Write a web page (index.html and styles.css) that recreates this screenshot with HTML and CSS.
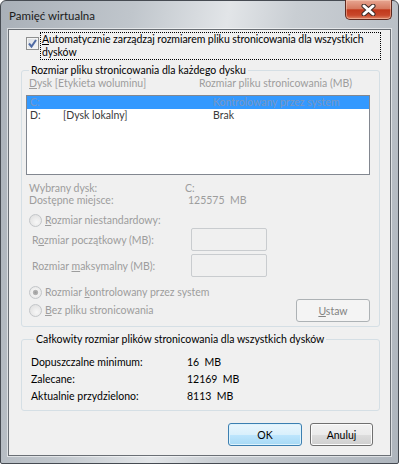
FILE: index.html
```html
<!DOCTYPE html>
<html lang="pl">
<head>
    <meta charset="UTF-8">
    <meta name="viewport" content="width=device-width, initial-scale=1.0">
    <title>Pamięć wirtualna</title>
    <link rel="stylesheet" href="styles.css">
</head>
<body>

<div class="window">
    <div class="titlebar">
        <span class="title">Pamięć wirtualna</span>
        <button class="close" type="button" aria-label="Zamknij">
            <svg width="17" height="12" viewBox="0 0 17 12">
                <path d="M4 2 L13 10 M13 2 L4 10" stroke="#3b2a26" stroke-width="5" stroke-linecap="round"/>
                <path d="M4 2 L13 10 M13 2 L4 10" stroke="#ffffff" stroke-width="3" stroke-linecap="round"/>
            </svg>
        </button>
    </div>

    <div class="client">
        <div class="auto-row">
            <span class="checkbox">
                <svg width="11" height="11" viewBox="0 0 11 11">
                    <path d="M2 5.5 L4.5 8.5 L9 2" fill="none" stroke="#4f6aa3" stroke-width="2"/>
                </svg>
            </span>
            <span class="auto-text"><u>A</u>utomatycznie zarządzaj rozmiarem pliku stronicowania dla wszystkich dysków</span>
        </div>

        <fieldset class="group drives">
            <legend>Rozmiar pliku stronicowania dla każdego dysku</legend>

            <div class="columns disabled">
                <span><u>D</u>ysk [Etykieta woluminu]</span>
                <span>Rozmiar pliku stronicowania (MB)</span>
            </div>

            <ul class="drive-list">
                <li class="selected"><span>C:</span><span></span><span>Kontrolowany przez system</span></li>
                <li><span>D:</span><span>[Dysk lokalny]</span><span>Brak</span></li>
            </ul>

            <div class="drive-info disabled">
                <span>Wybrany dysk:</span><span class="val-c">C:</span>
                <span>Dostępne miejsce:</span><span>125575&nbsp; MB</span>
            </div>

            <div class="radio-row disabled first">
                <span class="radio"></span><span><u>R</u>ozmiar niestandardowy:</span>
            </div>
            <div class="size-row disabled">
                <span>R<u>o</u>zmiar początkowy (MB):</span><span class="textbox"></span>
            </div>
            <div class="size-row second disabled">
                <span>Rozmiar <u>m</u>aksymalny (MB):</span><span class="textbox"></span>
            </div>
            <div class="radio-row disabled system">
                <span class="radio checked"></span><span>Rozmiar <u>k</u>ontrolowany przez system</span>
            </div>
            <div class="radio-row disabled last">
                <span class="radio"></span><span><u>B</u>ez pliku stronicowania</span>
                <button class="btn btn-disabled" type="button"><u>U</u>staw</button>
            </div>
        </fieldset>

        <fieldset class="group totals">
            <legend>Całkowity rozmiar plików stronicowania dla wszystkich dysków</legend>
            <div class="totals-grid">
                <span>Dopuszczalne minimum:</span><span>16&nbsp; MB</span>
                <span>Zalecane:</span><span>12169&nbsp; MB</span>
                <span>Aktualnie przydzielono:</span><span>8113&nbsp; MB</span>
            </div>
        </fieldset>

        <div class="buttons">
            <button class="btn btn-default btn-ok" type="button">OK</button>
            <button class="btn btn-cancel" type="button">Anuluj</button>
        </div>
    </div>
</div>

</body>
</html>
```

FILE: styles.css
```css
body {
    margin: 0;
    font-family: "Segoe UI", Lato, "Noto Sans", sans-serif;
    font-size: 10.5px;
    color: #000;
    background: #ffffff;
}

.window {
    width: 399px;
    height: 464px;
    box-sizing: border-box;
    border: 1px solid #464b52;
    border-radius: 6px 6px 2px 2px;
    padding: 0 7px 7px;
    background: linear-gradient(100deg, #a9b0b8 0%, #c0c6cc 28%, #e2e5e8 48%, #c9ced3 62%, #aeb5bd 100%);
}

.titlebar {
    height: 28px;
    display: flex;
    align-items: flex-start;
}

.title {
    margin-top: 8px;
    margin-left: 1px;
    font-size: 11.5px;
    color: #1b1b1b;
}

.close {
    margin-left: auto;
    margin-top: -1px;
    margin-right: -1px;
    width: 47px;
    height: 20px;
    padding: 0;
    border: 1px solid #5e2a20;
    border-top: none;
    border-radius: 0 0 5px 5px;
    background: linear-gradient(#e7a692 0%, #d67a60 45%, #c1391c 52%, #c8472a 80%, #df8566 100%);
    box-shadow: inset 0 0 0 1px rgba(255, 220, 200, 0.45);
    display: flex;
    align-items: center;
    justify-content: center;
}

.client {
    height: 427px;
    box-sizing: border-box;
    border: 1px solid #6a6f75;
    box-shadow: 0 0 0 1px rgba(255, 255, 255, 0.55);
    background: #f0f0f0;
    display: flex;
    flex-direction: column;
}

/* checkbox row */
.auto-row {
    display: flex;
    align-items: flex-start;
    margin: 3px 10px 0 17px;
}

.checkbox {
    width: 11px;
    height: 11px;
    margin-top: 4px;
    margin-right: 2px;
    flex: none;
    border: 1px solid #8e8f8f;
    background: linear-gradient(135deg, #d9dde2, #f6f7f8);
    box-shadow: inset 0 0 0 1px #f4f4f4;
    display: flex;
    align-items: center;
    justify-content: center;
}

.auto-text {
    line-height: 13px;
    padding: 0 1px;
    letter-spacing: -0.05px;
    outline: 1px dotted #000;
    outline-offset: 0;
}

/* group boxes */
.group {
    margin: 5px 10px 0 12px;
    padding: 0 9px 0 4px;
    border: 1px solid #d5dfe5;
    border-radius: 3px;
    min-inline-size: 0;
}

.group legend {
    margin-left: 3px;
    padding: 0 2px;
    line-height: 13px;
}

.disabled {
    color: #9d9d9d;
}

.columns {
    display: flex;
    line-height: 13px;
    padding-left: 3px;
}

.columns span:first-child {
    width: 170px;
}

.drive-list {
    list-style: none;
    margin: 5px 0 0;
    padding: 0;
    height: 80px;
    box-sizing: border-box;
    border: 1px solid #828790;
    background: #ffffff;
}

.drive-list li {
    display: grid;
    grid-template-columns: 33px 150px auto;
    padding-left: 3px;
    line-height: 13px;
    color: #3a3a3a;
}

.drive-list li.selected {
    background: #3399ff;
    color: #7797c4;
}

.drive-info {
    display: grid;
    grid-template-columns: 156px auto;
    margin-top: 7px;
    padding-left: 3px;
    line-height: 12px;
}

.drive-info span:nth-child(4) {
    padding-left: 3px;
}

.radio-row {
    display: flex;
    align-items: center;
    gap: 3px;
    padding-left: 3px;
    line-height: 13px;
}

.radio-row.first {
    margin-top: 8px;
}

.radio-row.system {
    margin-top: 9px;
}

.radio-row.last {
    margin-top: 0;
    margin-bottom: 4px;
    height: 23px;
}

.radio {
    width: 11px;
    height: 11px;
    flex: none;
    border-radius: 50%;
    border: 1px solid #c3c6c9;
    background: radial-gradient(circle at 60% 65%, #f7f7f7 0%, #e4e4e4 70%, #d8d8d8 100%);
}

.radio.checked {
    background: radial-gradient(circle, #9c9c9c 0%, #b5b5b5 30%, #f2f2f2 40%, #e2e2e2 100%);
}

.size-row {
    display: flex;
    align-items: center;
    margin-top: 1px;
    padding-left: 6px;
    height: 23px;
}

.size-row.second {
    margin-top: 3px;
}

.size-row span:first-child {
    width: 159px;
}

.textbox {
    width: 76px;
    height: 23px;
    box-sizing: border-box;
    border: 1px solid #c9cccf;
    border-radius: 2px;
    background: #f0f0f0;
}

/* buttons */
.btn {
    font-family: inherit;
    font-size: 10.5px;
    height: 23px;
    width: 74px;
    padding: 0;
    border: 1px solid #707070;
    border-radius: 3px;
    color: #000;
    background: linear-gradient(#f2f2f2 0%, #ebebeb 50%, #dddddd 51%, #cfcfcf 100%);
    box-shadow: inset 0 0 0 1px #fcfcfc;
}

.radio-row .btn {
    margin-left: auto;
}

.btn-disabled {
    color: #838383;
    border-color: #adb2b5;
    background: #f4f4f4;
    box-shadow: none;
}

.btn-default {
    border-color: #3c7fb1;
    background: linear-gradient(#eaf6fd 0%, #d9f0fc 50%, #bee6fd 51%, #a7d9f5 100%);
    box-shadow: inset 0 0 0 1px #ddf3fd;
}

.btn-cancel {
    width: 63px;
}

.totals {
    margin-top: 6px;
    padding: 8px 9px 5px 9px;
}

.totals-grid {
    display: grid;
    grid-template-columns: 156px auto;
    line-height: 17px;
}

.buttons {
    display: flex;
    justify-content: flex-end;
    gap: 8px;
    margin: 12px 17px 0 0;
}
```
